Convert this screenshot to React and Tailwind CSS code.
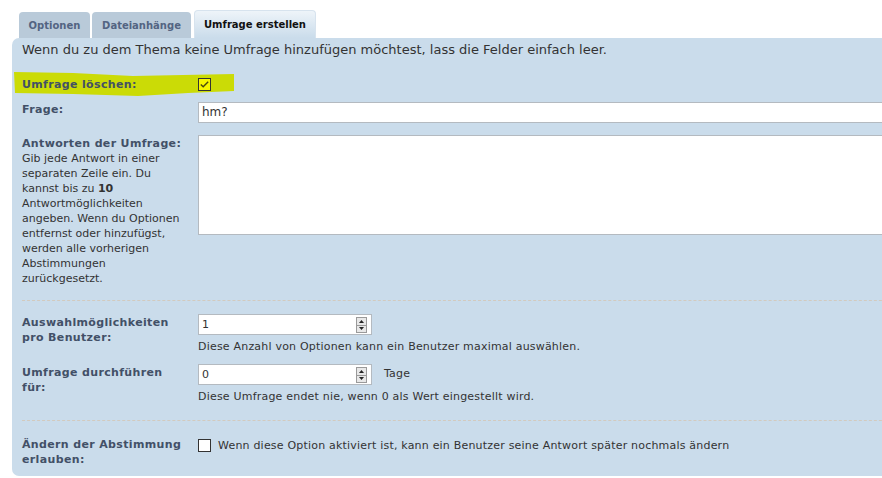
import React from 'react';

const Spinner = () => (
  <div className="absolute right-[4px] top-[2px] flex h-[16px] w-[11px] flex-col border border-[#9a9a9a] bg-[#e8e8e8]">
    <div className="flex flex-1 items-center justify-center border-b border-[#9a9a9a]">
      <svg width="5" height="3" viewBox="0 0 5 3"><path d="M0 3 L2.5 0 L5 3 Z" fill="#222" /></svg>
    </div>
    <div className="flex flex-1 items-center justify-center">
      <svg width="5" height="3" viewBox="0 0 5 3"><path d="M0 0 L2.5 3 L5 0 Z" fill="#222" /></svg>
    </div>
  </div>
);

const NumberBox = ({ value }) => (
  <div className="relative h-[21px] w-[174px] border border-[#b4bac0] bg-white pl-[3px] text-[11px] leading-[19px] text-[#333]">
    {value}
    <Spinner />
  </div>
);

const Label = ({ children }) => (
  <div className="w-[176px] shrink-0">
    <div className="w-[170px] text-[11px] font-bold leading-[15px] tracking-[0.35px] text-[#425067]">{children}</div>
  </div>
);

const Dashed = () => <div className="border-0 border-b border-dashed border-[#d2cabe]" />;

export default function App() {
  return (
    <div
      className="h-[478px] w-[882px] overflow-hidden bg-white pt-[10px]"
      style={{ fontFamily: '"DejaVu Sans", Verdana, sans-serif' }}
    >
      {/* Tabs */}
      <div className="ml-[19px] flex items-end gap-[2px]">
        <div className="flex h-[26px] w-[71px] items-center justify-center rounded-t-[4px] bg-[#b9cad9] text-[10px] font-bold text-[#536482]">
          Optionen
        </div>
        <div className="flex h-[26px] w-[99px] items-center justify-center rounded-t-[4px] bg-[#b9cad9] text-[10px] font-bold text-[#536482]">
          Dateianhänge
        </div>
        <div className="ml-[1px] flex h-[28px] w-[122px] items-center justify-center rounded-t-[4px] border border-b-0 border-[#d7e3ee] bg-gradient-to-b from-[#eef4f9] to-[#cadceb] text-[10px] font-bold text-[#111]">
          Umfrage erstellen
        </div>
      </div>

      {/* Panel */}
      <div className="relative ml-[12px] w-[920px] rounded-l-[7px] bg-[#cadceb] pb-[9px] pl-[10px] pt-[4px]">
        <p className="text-[13px] leading-[16px] text-[#333]">
          Wenn du zu dem Thema keine Umfrage hinzufügen möchtest, lass die Felder einfach leer.
        </p>

        {/* Highlight marker */}
        <svg className="absolute left-[1px] top-[33px]" width="224" height="26" viewBox="0 0 224 26">
          <path
            d="M1 1 L60 2 L120 5 L170 4 L221 3 L221 20 L175 22 L125 25 L60 23 L2 22 Z"
            fill="#cbdb06"
          />
        </svg>

        <div className="relative mt-[19px] flex items-center">
          <Label>Umfrage löschen:</Label>
          <div className="flex h-[13px] w-[13px] items-center justify-center border border-[#333] bg-[#f7f700]">
            <svg width="9" height="7" viewBox="0 0 9 7">
              <path d="M0.8 3.5 L3.2 5.8 L8.2 0.8" fill="none" stroke="#4a4a10" strokeWidth="1.4" />
            </svg>
          </div>
        </div>

        <div className="mt-[10px] flex">
          <div className="pt-[0px]"><Label>Frage:</Label></div>
          <div className="h-[21px] flex-1 border border-[#b4bac0] bg-white pl-[3px] text-[12px] leading-[19px] text-[#333]">
            hm?
          </div>
        </div>

        <div className="mt-[12px] flex">
          <div className="w-[176px] shrink-0 pt-[1px]">
            <div className="w-[166px] text-[11px] leading-[15px] text-[#333]">
              <span className="font-bold tracking-[0.35px] text-[#425067]">Antworten der Umfrage:</span>
              <br />
              Gib jede Antwort in einer separaten Zeile ein. Du kannst bis zu <b>10</b> Antwortmöglichkeiten angeben. Wenn du Optionen entfernst oder hinzufügst, werden alle vorherigen Abstimmungen zurückgesetzt.
            </div>
          </div>
          <div className="h-[100px] flex-1 border border-[#b4bac0] bg-white" />
        </div>

        <div className="mt-[14px]"><Dashed /></div>

        <div className="mt-[13px] flex">
          <div className="pt-[1px]"><Label>Auswahlmöglichkeiten<br />pro Benutzer:</Label></div>
          <div>
            <NumberBox value="1" />
            <p className="mt-[4px] text-[11px] leading-[15px] tracking-[0.2px] text-[#333]">
              Diese Anzahl von Optionen kann ein Benutzer maximal auswählen.
            </p>
          </div>
        </div>

        <div className="mt-[10px] flex">
          <div className="pt-[1px]"><Label>Umfrage durchführen<br />für:</Label></div>
          <div>
            <div className="flex items-center gap-[12px]">
              <NumberBox value="0" />
              <span className="text-[11px] tracking-[0.2px] text-[#333]">Tage</span>
            </div>
            <p className="mt-[4px] text-[11px] leading-[15px] tracking-[0.2px] text-[#333]">
              Diese Umfrage endet nie, wenn 0 als Wert eingestellt wird.
            </p>
          </div>
        </div>

        <div className="mt-[16px]"><Dashed /></div>

        <div className="mt-[16px] flex">
          <Label>Ändern der Abstimmung<br />erlauben:</Label>
          <div className="flex items-start gap-[7px] pt-[2px]">
            <div className="h-[13px] w-[13px] border border-[#333] bg-white" />
            <span className="text-[11px] leading-[13px] tracking-[0.2px] text-[#333]">
              Wenn diese Option aktiviert ist, kann ein Benutzer seine Antwort später nochmals ändern
            </span>
          </div>
        </div>
      </div>
    </div>
  );
}
